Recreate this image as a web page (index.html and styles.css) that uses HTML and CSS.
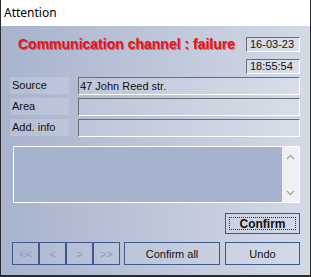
FILE: index.html
```html
<!DOCTYPE html>
<html lang="en">
<head>
    <meta charset="UTF-8">
    <meta name="viewport" content="width=device-width, initial-scale=1.0">
    <title>Attention</title>
    <link rel="stylesheet" href="styles.css">
</head>
<body>
    <div class="window">
        <div class="titlebar">Attention</div>
        <div class="panel">
            <div class="header">
                <div class="alarm">Communication channel : failure</div>
                <div class="stamp">16-03-23</div>
                <div class="stamp stamp-time">18:55:54</div>
            </div>

            <div class="fields">
                <div class="label">Source</div>
                <div class="field">47 John Reed str.</div>
                <div class="label">Area</div>
                <div class="field"></div>
                <div class="label">Add. info</div>
                <div class="field"></div>
            </div>

            <div class="memo">
                <div class="memo-text"></div>
                <div class="scrollbar">
                    <svg width="9" height="6" viewBox="0 0 9 6"><path d="M1 5 L4.5 1.5 L8 5" fill="none" stroke="#a6a6a6" stroke-width="1.3"/></svg>
                    <svg width="9" height="6" viewBox="0 0 9 6"><path d="M1 1 L4.5 4.5 L8 1" fill="none" stroke="#a6a6a6" stroke-width="1.3"/></svg>
                </div>
            </div>

            <div class="confirm-row">
                <button class="btn btn-confirm"><span class="focus">Confirm</span></button>
            </div>

            <div class="bottom-row">
                <div class="nav">
                    <button class="btn nav-btn">&lt;&lt;</button>
                    <button class="btn nav-btn">&lt;</button>
                    <button class="btn nav-btn">&gt;</button>
                    <button class="btn nav-btn">&gt;&gt;</button>
                </div>
                <button class="btn btn-all">Confirm all</button>
                <button class="btn btn-undo">Undo</button>
            </div>
        </div>
    </div>
</body>
</html>
```

FILE: styles.css
```css
body{
    margin: 0;
    font-family: "Liberation Sans", Arial, sans-serif;
    font-size: 11px;
    color: #111;
}
.window{
    width: 311px;
    height: 277px;
    box-sizing: border-box;
    border-left: 1px solid #2b2b2b;
    border-right: 1px solid #2b2b2b;
    border-bottom: 2px solid #2b2b2b;
    display: flex;
    flex-direction: column;
}
.titlebar{
    height: 26px;
    flex: none;
    background: #fff;
    font-family: "Noto Sans", sans-serif;
    font-size: 12px;
    line-height: 26px;
    padding-left: 3px;
    color: #000;
}
.panel{
    flex: 1;
    background: linear-gradient(to right, #a7b3cd, #d3d9e6);
    padding: 11px 10px 10px 9px;
    display: flex;
    flex-direction: column;
}
.header{
    display: grid;
    grid-template-columns: 1fr 54px;
    grid-template-rows: 15px 15px;
    row-gap: 7px;
}
.alarm{
    grid-row: 1;
    margin-left: 8px;
    font-weight: bold;
    font-size: 14px;
    line-height: 15px;
    color: #ec1018;
    text-shadow: 1px 1px 0 rgba(130, 0, 0, 0.45);
}
.stamp{
    grid-column: 2;
    grid-row: 1;
    box-sizing: border-box;
    border-top: 1px solid #6e6e6e;
    border-left: 1px solid #6e6e6e;
    border-right: 1px solid #fff;
    border-bottom: 1px solid #fff;
    background: rgba(255, 255, 255, 0.18);
    line-height: 13px;
    padding-left: 3px;
}
.stamp-time{
    grid-row: 2;
}
.fields{
    margin-top: 3px;
    display: grid;
    grid-template-columns: 59px 1fr;
    grid-auto-rows: 18px;
    column-gap: 9px;
    row-gap: 3px;
}
.label{
    background: rgba(255, 255, 255, 0.16);
    height: 17px;
    line-height: 17px;
    padding-left: 2px;
}
.field{
    box-sizing: border-box;
    border-top: 1px solid #6e6e6e;
    border-left: 1px solid #6e6e6e;
    border-right: 1px solid #fff;
    border-bottom: 1px solid #fff;
    background: rgba(255, 255, 255, 0.14);
    line-height: 16px;
    padding-left: 1px;
}
.memo{
    margin: 9px 0 0 3px;
    height: 57px;
    box-sizing: border-box;
    border: 1px solid #fff;
    display: flex;
}
.memo-text{
    flex: 1;
    background: #a5b3ce;
}
.scrollbar{
    width: 17px;
    background: #eef0f3;
    display: flex;
    flex-direction: column;
    justify-content: space-between;
    align-items: center;
    padding: 7px 0 6px;
}
.btn{
    font-family: "Liberation Sans", Arial, sans-serif;
    font-size: 11px;
    color: #111;
    background: rgba(255, 255, 255, 0.06);
    border: 1px solid #40598c;
    padding: 0;
    margin: 0;
}
.confirm-row{
    margin-top: 10px;
    display: flex;
    justify-content: flex-end;
}
.btn-confirm{
    width: 75px;
    height: 21px;
    padding: 3px;
    font-weight: bold;
    font-size: 12px;
}
.focus{
    display: block;
    height: 100%;
    box-sizing: border-box;
    border: 1px dotted #333;
    line-height: 13px;
}
.bottom-row{
    margin: 8px 0 0 2px;
    display: flex;
    height: 23px;
}
.nav{
    display: flex;
    margin-right: 4px;
}
.nav-btn{
    width: 27px;
    color: #8a9ac0;
}
.btn-all{
    width: 96px;
    margin-right: 5px;
}
.btn-undo{
    width: 75px;
}
```
